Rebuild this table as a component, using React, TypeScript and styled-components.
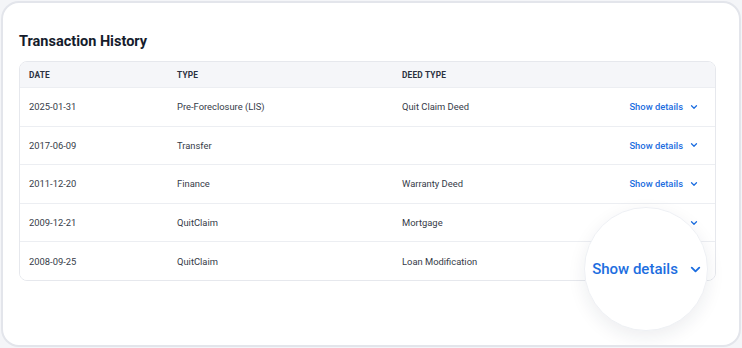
import styled, { createGlobalStyle } from 'styled-components';

const GlobalStyle = createGlobalStyle`
	html, body {
		margin: 0;
		padding: 0;
		background: #f4f5f8;
		font-family: Roboto, "Noto Sans", sans-serif;
	}
`;

const StyledCard = styled.section`
	position: relative;
	box-sizing: border-box;
	width: 740px;
	height: 346px;
	margin: 1px;
	background: #ffffff;
	border: 2px solid #e3e5eb;
	border-radius: 18px;
	padding: 30px 23px 0 16px;
	overflow: hidden;
`;

const StyledTitle = styled.h2`
	margin: 0 0 10px 0;
	font-size: 14.5px;
	line-height: 18px;
	font-weight: 700;
	color: #151c2c;
`;

const StyledTable = styled.div`
	border: 1px solid #e6e8ed;
	border-radius: 8px;
	overflow: hidden;
`;

const StyledRow = styled.div<{ $head?: boolean }>`
	display: grid;
	grid-template-columns: 148px 225px 1fr auto;
	align-items: center;
	box-sizing: border-box;
	height: ${(p) => (p.$head ? '25px' : '38.6px')};
	padding: 0 16px 0 9px;
	background: ${(p) => (p.$head ? '#f5f6f9' : '#ffffff')};
	border-top: ${(p) => (p.$head ? 'none' : '1px solid #eceef2')};
`;

const StyledHeadCell = styled.span`
	font-size: 8.3px;
	font-weight: 700;
	letter-spacing: 0.2px;
	color: #2b3140;
	text-transform: uppercase;
`;

const StyledCell = styled.span`
	font-size: 9.4px;
	color: #353b48;
`;

const StyledDetails = styled.span<{ $big?: boolean }>`
	display: inline-flex;
	align-items: center;
	gap: ${(p) => (p.$big ? '10px' : '6px')};
	font-size: ${(p) => (p.$big ? '15px' : '9.4px')};
	font-weight: 500;
	color: #1d6ee0;
`;

const StyledLens = styled.div`
	position: absolute;
	left: 581px;
	top: 204px;
	width: 124px;
	height: 124px;
	border-radius: 50%;
	background: #ffffff;
	border: 1px solid #eef0f4;
	box-shadow: 0 6px 18px rgba(30, 40, 70, 0.08);
	display: flex;
	align-items: center;
	justify-content: center;
	padding-left: 3px;
	box-sizing: border-box;
`;

function Chevron(props: { size: number }) {
	return (
		<svg width={props.size} height={props.size} viewBox="0 0 24 24" fill="none">
			<path d="M6 9l6 6 6-6" stroke="#1d6ee0" strokeWidth={3} strokeLinecap="round" strokeLinejoin="round" />
		</svg>
	);
}

const transactions = [
	{ date: '2025-01-31', type: 'Pre-Foreclosure (LIS)', deed: 'Quit Claim Deed' },
	{ date: '2017-06-09', type: 'Transfer', deed: '' },
	{ date: '2011-12-20', type: 'Finance', deed: 'Warranty Deed' },
	{ date: '2009-12-21', type: 'QuitClaim', deed: 'Mortgage' },
	{ date: '2008-09-25', type: 'QuitClaim', deed: 'Loan Modification' },
];

export default function App() {
	return (
		<>
			<GlobalStyle />
			<StyledCard>
				<StyledTitle>Transaction History</StyledTitle>
				<StyledTable>
					<StyledRow $head>
						<StyledHeadCell>Date</StyledHeadCell>
						<StyledHeadCell>Type</StyledHeadCell>
						<StyledHeadCell>Deed Type</StyledHeadCell>
						<span />
					</StyledRow>
					{transactions.map((t, index) => (
						<StyledRow key={index}>
							<StyledCell>{t.date}</StyledCell>
							<StyledCell>{t.type}</StyledCell>
							<StyledCell>{t.deed}</StyledCell>
							<StyledDetails>
								Show details <Chevron size={10} />
							</StyledDetails>
						</StyledRow>
					))}
				</StyledTable>
				{/* magnified view of the last row's toggle */}
				<StyledLens>
					<StyledDetails $big>
						Show details <Chevron size={15} />
					</StyledDetails>
				</StyledLens>
			</StyledCard>
		</>
	);
}
